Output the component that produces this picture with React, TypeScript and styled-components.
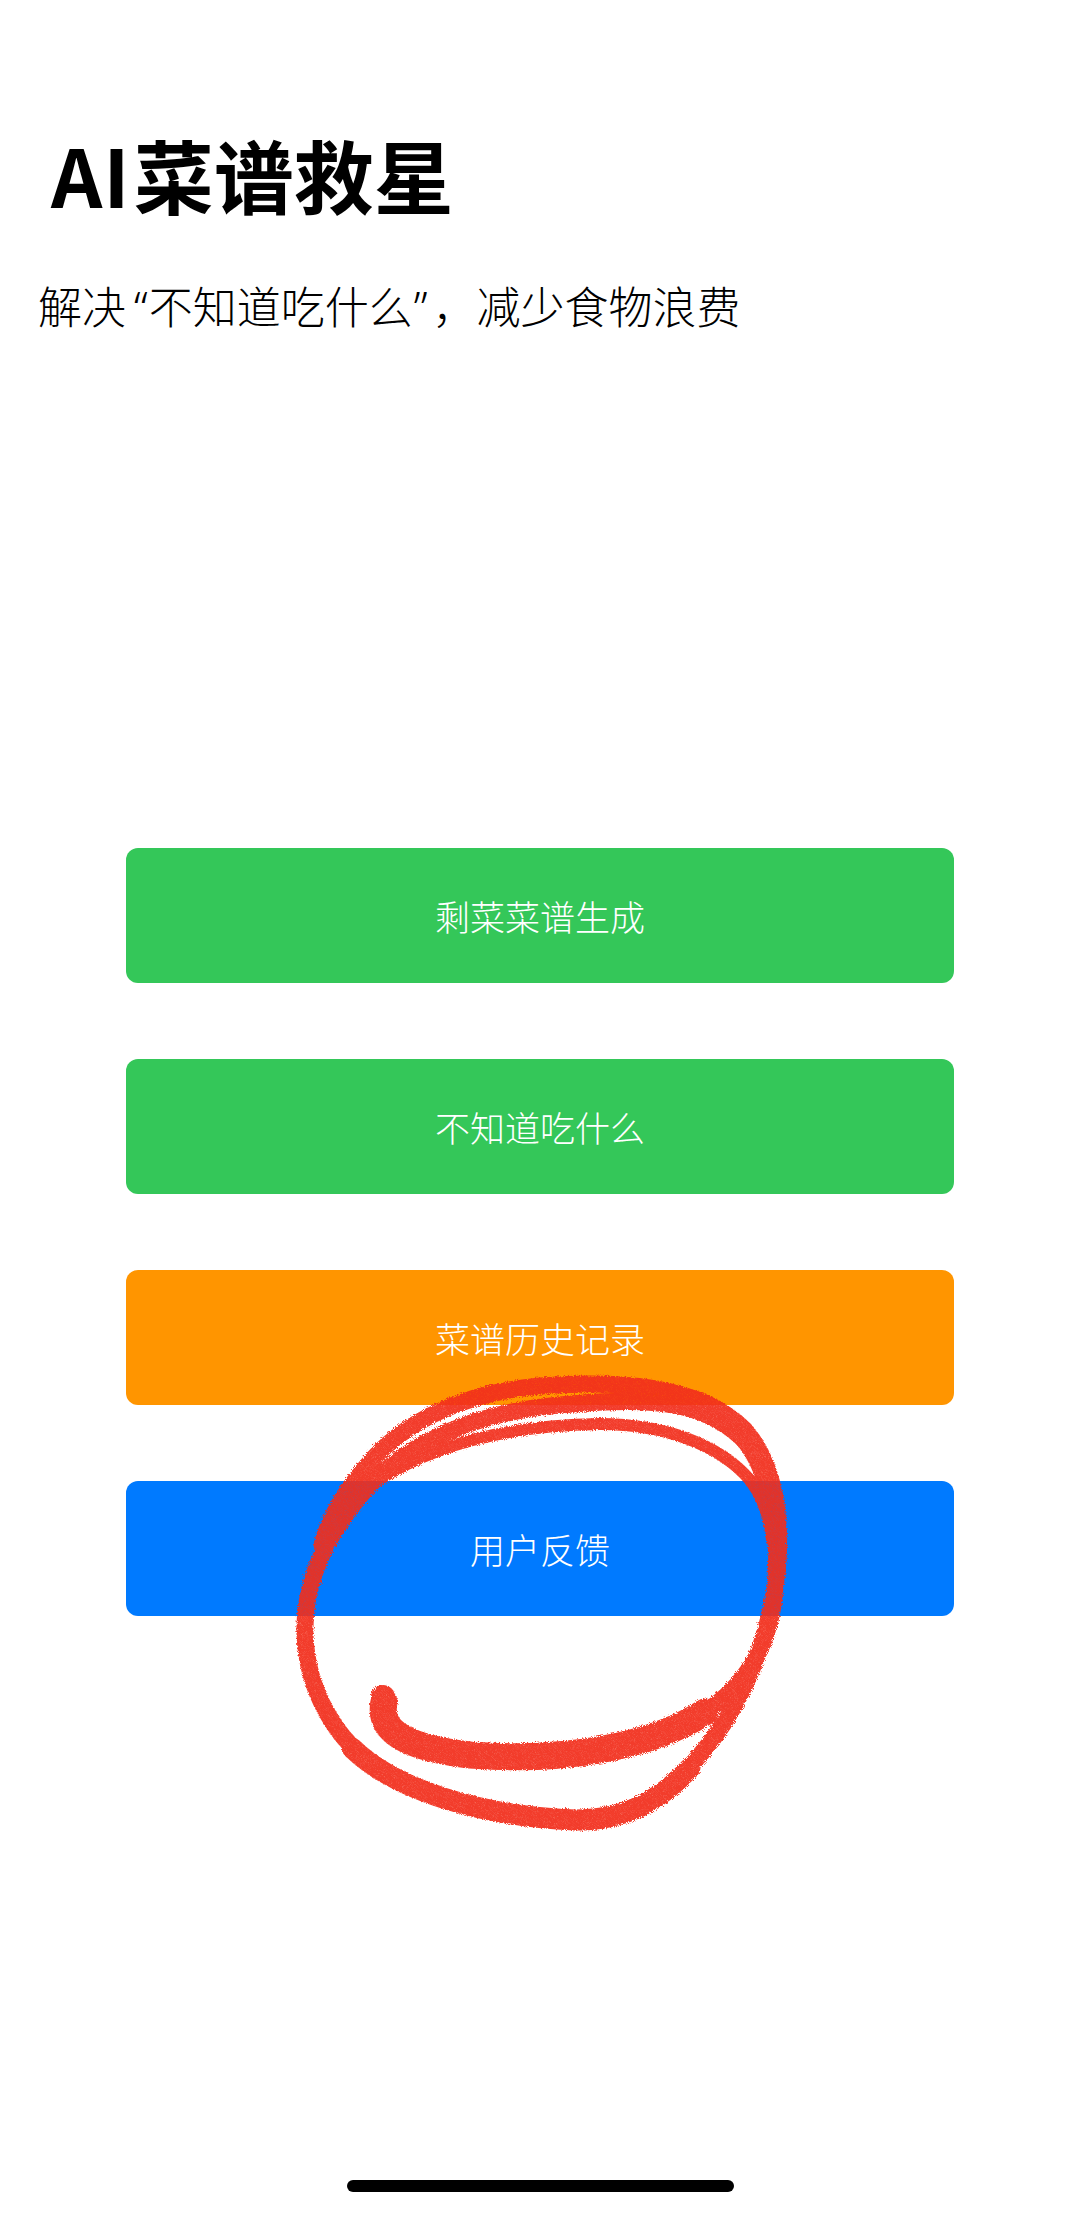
import React from "react";
import styled, {createGlobalStyle} from "styled-components";

const GlobalStyle = createGlobalStyle`
  html, body {
    margin: 0;
    padding: 0;
    background: #ffffff;
  }
  body {
    font-family: "Noto Sans CJK SC", "Noto Sans", sans-serif;
    -webkit-font-smoothing: antialiased;
  }
`

const Screen = styled.div`
  position: relative;
  width: 1080px;
  min-height: 2213px;
  display: flex;
  flex-direction: column;
  background: #fff;
  overflow: hidden;
`

const Header = styled.header`
  display: flex;
  flex-direction: column;
  padding: 133px 0 0 51px;
  gap: 72px;
`

const Title = styled.h1`
  margin: 0;
  font-family: "Noto Sans CJK SC", sans-serif;
  font-weight: 700;
  font-size: 80px;
  line-height: 1;
  color: #000;
`

const TitleLatin = styled.span`
  letter-spacing: 1px;
  margin-right: 3px;
`

const Subtitle = styled.p`
  margin: 0 0 0 -13px;
  font-family: "Noto Sans", "Noto Sans CJK SC", sans-serif;
  font-weight: 300;
  font-size: 44px;
  line-height: 1;
  color: #000;
`

const Quote = styled.span<{ $side: "open" | "close" }>`
  margin: ${p => p.$side === "open" ? "0 1px 0 8px" : "0 5px 0 1px"};
`

const Actions = styled.nav`
  display: flex;
  flex-direction: column;
  gap: 76px;
  margin: 519px 126px 0;
`

const ActionButton = styled.button<{ $color: string }>`
  height: 135px;
  border: 0;
  border-radius: 12px;
  background: ${p => p.$color};
  color: #fff;
  font-family: "Noto Sans CJK SC", sans-serif;
  font-size: 35px;
  font-weight: 300;
  cursor: pointer;
  display: flex;
  align-items: center;
  justify-content: center;
`

const Spacer = styled.div`
  flex: 1;
`

const HomeIndicator = styled.div`
  align-self: center;
  width: 387px;
  height: 12px;
  border-radius: 6px;
  background: #000;
  margin: 0 0 21px 0;
`

const Scribble = styled.svg`
  position: absolute;
  left: 0;
  top: 0;
  width: 1080px;
  height: 2213px;
  pointer-events: none;
`

const buttons = [
    {label: "剩菜菜谱生成", color: "#34C759"},
    {label: "不知道吃什么", color: "#34C759"},
    {label: "菜谱历史记录", color: "#FF9500"},
    {label: "用户反馈", color: "#007AFF"},
]

const RED = "#F22E1B"

const App: React.FC = () => {
    return <Screen>
        <GlobalStyle/>
        <Header>
            <Title><TitleLatin>AI</TitleLatin>菜谱救星</Title>
            <Subtitle>
                解决<Quote $side="open">“</Quote>不知道吃什么<Quote $side="close">”</Quote>，减少食物浪费
            </Subtitle>
        </Header>

        <Actions>
            {buttons.map(b => <ActionButton key={b.label} $color={b.color}>{b.label}</ActionButton>)}
        </Actions>

        <Spacer/>
        <HomeIndicator/>

        {/* hand drawn red circle over the feedback button */}
        <Scribble viewBox="0 0 1080 2213">
            <defs>
                <filter id="pencil" x="-10%" y="-10%" width="120%" height="120%">
                    <feTurbulence type="fractalNoise" baseFrequency="1.1" numOctaves="2" result="noise"/>
                    <feColorMatrix in="noise" type="matrix"
                                   values="0 0 0 0 0  0 0 0 0 0  0 0 0 0 0  0 0 0 -0.6 1.3" result="grain"/>
                    <feComposite in="SourceGraphic" in2="grain" operator="in" result="textured"/>
                    <feDisplacementMap in="textured" in2="noise" scale="5"/>
                </filter>
            </defs>
            <g fill="none" stroke={RED} strokeLinecap="round" strokeLinejoin="round" opacity="0.93"
               filter="url(#pencil)">
                {/* main loop */}
                <path strokeWidth="17"
                      d="M 380 1698 C 372 1735 405 1750 470 1755 C 560 1762 650 1748 705 1712 C 745 1686 768 1648 774 1598 C 782 1535 772 1465 735 1430 C 690 1395 620 1400 560 1405 C 480 1412 410 1440 365 1490 C 330 1530 303 1580 305 1635 C 307 1690 335 1740 380 1770 C 430 1800 500 1818 575 1820 C 630 1820 670 1790 700 1755 C 735 1715 760 1660 772 1605 C 785 1540 780 1470 745 1430 C 700 1385 620 1380 540 1386 C 470 1392 405 1418 365 1468 C 345 1492 330 1515 322 1545"/>
                {/* heavier tail */}
                <path strokeWidth="27"
                      d="M 384 1702 C 378 1732 408 1748 470 1755 C 560 1762 650 1748 705 1712"/>
                {/* heavier bottom of loop */}
                <path strokeWidth="21"
                      d="M 352 1748 C 395 1790 480 1816 575 1820 C 630 1820 662 1798 690 1768"/>
                {/* repeated strokes across the top */}
                <path strokeWidth="14"
                      d="M 368 1486 C 425 1425 520 1402 620 1400 C 690 1400 740 1425 760 1465"/>
                <path strokeWidth="12"
                      d="M 375 1482 C 440 1440 520 1425 600 1424 C 665 1424 720 1445 750 1480 C 765 1500 770 1520 772 1540"/>
                <path strokeWidth="10"
                      d="M 470 1400 C 540 1385 620 1383 680 1392 C 710 1398 730 1410 745 1428"/>
                <circle cx="383" cy="1697" r="12" fill={RED} stroke="none"/>
            </g>
        </Scribble>
    </Screen>
}

export default App;
